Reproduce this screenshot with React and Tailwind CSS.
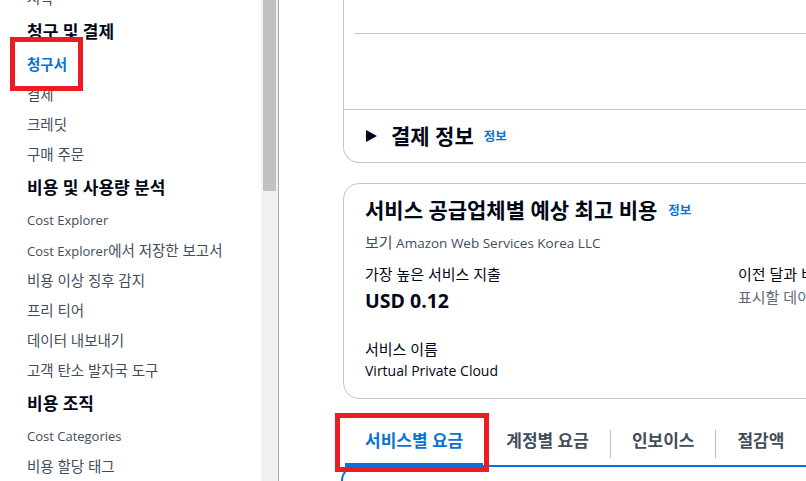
const navSections = [
  { items: ["시작"] },
  { heading: "청구 및 결제", items: ["청구서", "결제", "크레딧", "구매 주문"], active: "청구서" },
  {
    heading: "비용 및 사용량 분석",
    items: [
      "Cost Explorer",
      "Cost Explorer에서 저장한 보고서",
      "비용 이상 징후 감지",
      "프리 티어",
      "데이터 내보내기",
      "고객 탄소 발자국 도구",
    ],
  },
  { heading: "비용 조직", items: ["Cost Categories", "비용 할당 태그"] },
];

const tabs = ["서비스별 요금", "계정별 요금", "인보이스", "절감액"];

// 한글 구간은 조금 더 크게 (원본 화면의 한글 글꼴 폭에 맞춤)
function Ko({ text, k }) {
  return text.split(/([가-힣]+(?:\s+[가-힣]+)*)/).map((part, i) =>
    /[가-힣]/.test(part) ? (
      <span key={i} className={k}>
        {part}
      </span>
    ) : (
      part
    )
  );
}

function Sidebar() {
  return (
    <nav className="w-[261px] shrink-0 overflow-hidden">
      <div className="-mt-[16px] px-[27px]">
        {navSections.map((section, i) => (
          <div key={i}>
            {section.heading && (
              <div className="flex h-[36px] items-center text-[17px] font-bold text-[#000716]">{section.heading}</div>
            )}
            {section.items.map((item) => (
              <div
                key={item}
                className={
                  item === section.active
                    ? "flex h-[30px] items-center whitespace-nowrap text-[13px] font-semibold text-[#0972d3]"
                    : "flex h-[30px] items-center whitespace-nowrap text-[13px] text-[#414d5c]"
                }
              >
                <span>
                  <Ko text={item} k="text-[14.5px]" />
                </span>
              </div>
            ))}
          </div>
        ))}
      </div>
    </nav>
  );
}

function Scrollbar() {
  return (
    <div className="flex shrink-0">
      <div className="w-[17px] bg-[#f1f1f1] px-[2px]">
        <div className="h-[191px] w-[13px] bg-[#c1c1c1]" />
      </div>
      <div className="w-px bg-[#a9a9a9]" />
    </div>
  );
}

function InfoLink({ className = "" }) {
  return <span className={`text-[12.5px] font-bold text-[#0972d3] ${className}`}>정보</span>;
}

function App() {
  return (
    <div className="relative flex h-[481px] w-[806px] overflow-hidden bg-white font-['Open_Sans','Noto_Sans_CJK_KR',sans-serif]">
      <Sidebar />
      <Scrollbar />

      <main className="min-w-0 flex-1 overflow-hidden pl-[64px]">
        {/* 청구서 상단 카드 */}
        <section className="w-[720px] rounded-b-2xl border-x border-b border-[#c6c6cd]">
          <div className="h-[109px]">
            <div className="ml-[10px] h-[34px] border-b border-[#c6c6cd]" />
          </div>
          <div className="flex h-[53px] items-center border-t border-[#c6c6cd] pl-[22px]">
            <svg width="11" height="12" viewBox="0 0 11 12" className="text-[#000716]">
              <polygon points="0,0 11,6 0,12" fill="currentColor" />
            </svg>
            <h3 className="ml-[14px] text-[21px] font-bold leading-[26px] text-[#000716]">결제 정보</h3>
            <InfoLink className="ml-[10px] mt-[3px]" />
          </div>
        </section>

        {/* 서비스 공급업체별 예상 최고 비용 */}
        <section className="mt-[20px] w-[720px] rounded-2xl border border-[#c6c6cd] pb-[17px] pl-[21px] pt-[13px] text-[#000716]">
          <div className="flex items-center">
            <h2 className="text-[21px] font-bold leading-[26px]">서비스 공급업체별 예상 최고 비용</h2>
            <InfoLink className="ml-[11px] mt-[3px]" />
          </div>
          <p className="mt-[9px] text-[13.5px] leading-[20px] text-[#414d5c]">
            <Ko text="보기 Amazon Web Services Korea LLC" k="text-[15px]" />
          </p>
          <div className="mt-[11px] flex">
            <div className="w-[373px] shrink-0">
              <p className="text-[15px] leading-[20px]">가장 높은 서비스 지출</p>
              <p className="mt-[3px] text-[19.5px] font-bold leading-[28px]">USD 0.12</p>
              <p className="mt-[24px] text-[15px] leading-[20px]">서비스 이름</p>
              <p className="mt-[2px] text-[14px] leading-[20px]">Virtual Private Cloud</p>
            </div>
            <div className="whitespace-nowrap">
              <p className="text-[15px] leading-[20px]">이전 달과 비교</p>
              <p className="mt-[3px] text-[15px] leading-[20px] text-[#5f6b7a]">표시할 데이터가 없습니다</p>
            </div>
          </div>
        </section>

        {/* 탭 */}
        <div className="relative z-10 ml-[2px] mt-[20px] flex items-start whitespace-nowrap text-[17px] font-bold">
          {tabs.map((tab, i) => (
            <div key={tab} className="flex items-start">
              {i > 0 && <div className="mx-px mt-[11px] h-[28px] w-px bg-[#b6bec9]" />}
              {i === 0 ? (
                <div className="flex h-[48px] items-center border-b-4 border-[#0972d3] px-[20px] text-[#0972d3]">{tab}</div>
              ) : (
                <div className="flex h-[44px] items-center px-[20px] text-[#414d5c]">{tab}</div>
              )}
            </div>
          ))}
        </div>
        <div className="-ml-[2px] -mt-[2px] h-[40px] w-[720px] rounded-tl-2xl border-l-2 border-t-2 border-[#0972d3]" />
      </main>

      {/* 주석 상자 */}
      <div className="absolute left-[10px] top-[37px] h-[54px] w-[73px] border-[5px] border-[#ed1c24]" />
      <div className="absolute left-[335px] top-[413px] z-20 h-[59px] w-[154px] border-[5px] border-[#ed1c24]" />
    </div>
  );
}

export default App;
